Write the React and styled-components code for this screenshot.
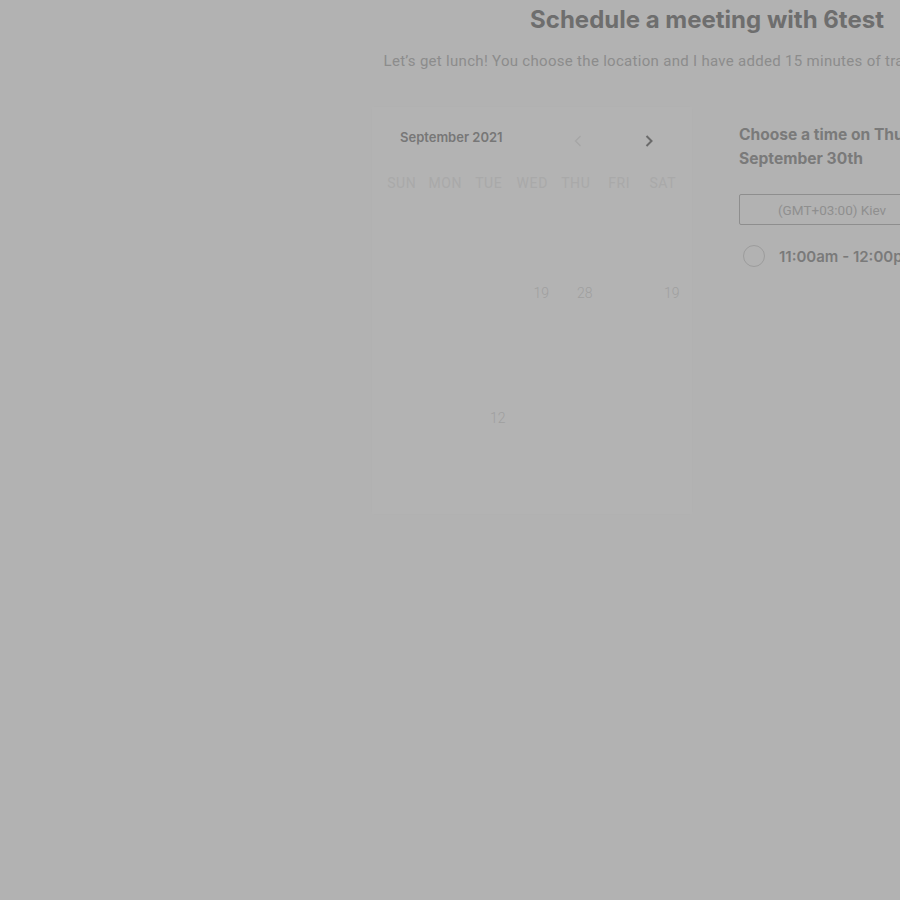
import styled, { createGlobalStyle } from "styled-components";

const GlobalStyle = createGlobalStyle`
  html, body {
    margin: 0;
    padding: 0;
    background: #b2b2b2;
    overflow: hidden;
  }
  body {
    font-family: Roboto, "Liberation Sans", sans-serif;
  }
`;

const WEEKDAYS = ["Sun", "Mon", "Tue", "Wed", "Thu", "Fri", "Sat"];

// only a few dates are showing through the fade
const ROWS = [
  ["", "", "", "", "", "", ""],
  ["", "", "", "19", "28", "", "19"],
  ["", "", "", "", "", "", ""],
  ["", "", "12", "", "", "", ""],
  ["", "", "", "", "", "", ""],
];

export default function App() {
  return (
    <>
      <GlobalStyle />
      <Page>
        <Content>
          <Title>Schedule a meeting with 6test</Title>
          <Description>
            Let’s get lunch! You choose the location and I have added 15 minutes of travel time each way.
          </Description>
          <Columns>
            <Calendar>
              <CalendarHeader>
                <Month>September 2021</Month>
                <Nav>
                  <Arrow $active={false}>
                    <svg width="8" height="12" viewBox="0 0 8 12">
                      <path d="M6.5 1 L1.5 6 L6.5 11" fill="none" stroke="currentColor" strokeWidth="1.3" />
                    </svg>
                  </Arrow>
                  <Arrow $active>
                    <svg width="8" height="12" viewBox="0 0 8 12">
                      <path d="M1.5 1 L6.5 6 L1.5 11" fill="none" stroke="currentColor" strokeWidth="2" />
                    </svg>
                  </Arrow>
                </Nav>
              </CalendarHeader>
              <DayGrid>
                {WEEKDAYS.map((d) => (
                  <Weekday key={d}>{d}</Weekday>
                ))}
                {ROWS.flat().map((n, i) => (
                  <DateCell key={i}>{n}</DateCell>
                ))}
              </DayGrid>
            </Calendar>
            <TimePanel>
              <TimeTitle>Choose a time on Thursday, September 30th</TimeTitle>
              <Zone>(GMT+03:00) Kiev</Zone>
              <Slot>
                <Radio />
                <SlotLabel>11:00am - 12:00pm</SlotLabel>
              </Slot>
            </TimePanel>
          </Columns>
        </Content>
      </Page>
    </>
  );
}

const Page = styled.div`
  width: 900px;
  height: 900px;
  overflow: hidden;
`;

const Content = styled.div`
  width: 670px;
  margin-left: 372px;
  display: flex;
  flex-direction: column;
  align-items: center;
`;

const Title = styled.h1`
  margin: 5px 0 0;
  font-family: Inter, "Liberation Sans", sans-serif;
  font-size: 24px;
  font-weight: 700;
  line-height: 30px;
  color: #6e6e6e;
  white-space: nowrap;
`;

const Description = styled.p`
  margin: 17px 0 0;
  font-size: 15px;
  letter-spacing: 0.3px;
  line-height: 18px;
  color: #8c8c8c;
  white-space: nowrap;
`;

const Columns = styled.div`
  align-self: stretch;
  margin-top: 37px;
  display: flex;
  gap: 20px;
`;

const Calendar = styled.div`
  width: 320px;
  height: 407px;
  box-sizing: border-box;
  padding: 18px 8px 0;
  background: #b3b3b3;
  box-shadow: 0 0 4px rgba(0, 0, 0, 0.012);
`;

const CalendarHeader = styled.div`
  display: flex;
  align-items: center;
  justify-content: space-between;
  padding: 0 0 0 20px;
  height: 24px;
`;

const Month = styled.span`
  font-family: Inter, "Liberation Sans", sans-serif;
  font-size: 13px;
  font-weight: 600;
  color: #777;
`;

const Nav = styled.div`
  display: flex;
  gap: 51px;
  margin-right: 25px;
  margin-top: 8px;
`;

const Arrow = styled.span`
  display: flex;
  width: 20px;
  justify-content: center;
  color: ${(p) => (p.$active ? "#6a6a6a" : "#a6a6a6")};
`;

const DayGrid = styled.div`
  display: grid;
  grid-template-columns: repeat(7, 43.5px);
  grid-template-rows: 24px;
  grid-auto-rows: 62.5px;
  margin-top: 26px;
`;

const Weekday = styled.span`
  text-align: center;
  font-size: 14px;
  text-transform: uppercase;
  letter-spacing: 0.6px;
  color: #a9a9a9;
  line-height: 16px;
`;

const DateCell = styled.span`
  display: flex;
  align-items: center;
  justify-content: center;
  padding-left: 18px;
  font-size: 14px;
  font-weight: 300;
  color: #9f9f9f;
`;

const TimePanel = styled.div`
  flex: 1;
  padding: 16px 0 0 27px;
`;

const TimeTitle = styled.h2`
  margin: 0;
  width: 280px;
  font-family: Inter, "Liberation Sans", sans-serif;
  font-size: 15.6px;
  font-weight: 700;
  line-height: 24px;
  color: #7a7a7a;
`;

const Zone = styled.div`
  margin-top: 23px;
  height: 31px;
  box-sizing: border-box;
  border: 1px solid #8e8e8e;
  border-radius: 2px;
  display: flex;
  align-items: center;
  padding-left: 38px;
  font-size: 13.5px;
  color: #8f8f8f;
`;

const Slot = styled.div`
  display: flex;
  align-items: center;
  gap: 14px;
  margin-top: 20px;
  padding-left: 4px;
`;

const Radio = styled.span`
  width: 22px;
  height: 22px;
  border-radius: 50%;
  border: 1px solid #9c9c9c;
  box-sizing: border-box;
`;

const SlotLabel = styled.span`
  font-family: Inter, "Liberation Sans", sans-serif;
  font-size: 15px;
  font-weight: 600;
  color: #7a7a7a;
  white-space: nowrap;
`;
